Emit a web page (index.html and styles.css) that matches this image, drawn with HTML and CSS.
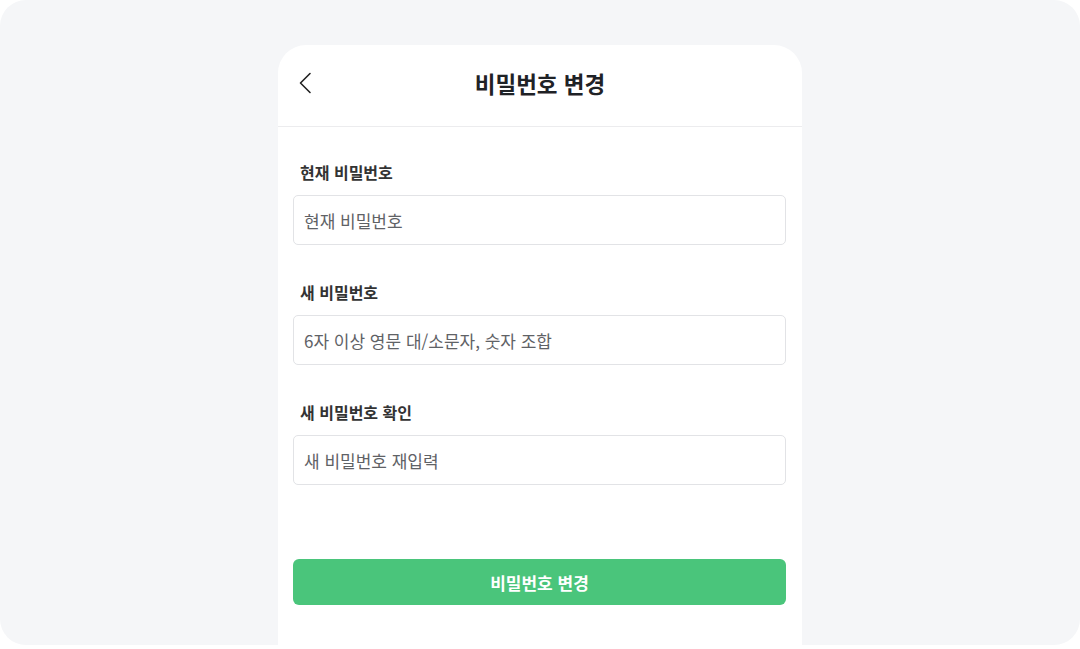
FILE: index.html
```html
<!DOCTYPE html>
<html lang="ko">
<head>
  <meta charset="UTF-8" />
  <meta name="viewport" content="width=device-width, initial-scale=1" />
  <title>비밀번호 변경</title>
  <link rel="stylesheet" href="styles.css">
</head>
<body>
  <div class="frame">
    <div class="card">
      <!-- Шапка с кнопкой назад -->
      <div class="header">
        <button class="back-button" aria-label="뒤로">
          <svg width="14" height="22" viewBox="0 0 14 22" fill="none">
            <path d="M12 1.5 L2.5 11 L12 20.5" stroke="#222" stroke-width="1.6" stroke-linecap="round" stroke-linejoin="round"/>
          </svg>
        </button>
        <div class="header-title">비밀번호 변경</div>
      </div>

      <form class="form">
        <div class="field">
          <label class="field-label" for="current-password">현재 비밀번호</label>
          <input class="field-input" id="current-password" type="password" placeholder="현재 비밀번호">
        </div>
        <div class="field">
          <label class="field-label" for="new-password">새 비밀번호</label>
          <input class="field-input" id="new-password" type="password" placeholder="6자 이상 영문 대/소문자, 숫자 조합">
        </div>
        <div class="field">
          <label class="field-label" for="confirm-password">새 비밀번호 확인</label>
          <input class="field-input" id="confirm-password" type="password" placeholder="새 비밀번호 재입력">
        </div>

        <button class="submit-button" type="button">비밀번호 변경</button>
      </form>
    </div>
  </div>
</body>
</html>
```

FILE: styles.css
```css
/* Reset */
* {
  margin: 0;
  padding: 0;
  box-sizing: border-box;
}
html, body {
  height: 100%;
  background: #fff;
  font-family: 'Noto Sans CJK KR', 'Noto Sans', sans-serif;
  color: #222;
  overflow: hidden;
}
.frame {
  height: 645px;
  background: #f5f6f8;
  border-radius: 26px;
  overflow: hidden;
  display: flex;
  justify-content: center;
  padding-top: 45px;
}
.card {
  width: 524px;
  background: #fff;
  border-radius: 28px 28px 0 0;
  display: flex;
  flex-direction: column;
}
.header {
  height: 82px;
  padding-bottom: 6px;
  border-bottom: 1px solid #ececee;
  display: flex;
  align-items: center;
  justify-content: center;
  position: relative;
}
.back-button {
  position: absolute;
  left: 20px;
  top: 27px;
  background: none;
  border: none;
  cursor: pointer;
  display: flex;
}
.header-title {
  font-size: 22.5px;
  font-weight: 700;
  color: #1f2226;
  line-height: 30px;
}
.form {
  padding: 34px 16px 0 15px;
  display: flex;
  flex-direction: column;
}
.field {
  display: flex;
  flex-direction: column;
  gap: 12px;
  margin-bottom: 36px;
}
.field-label {
  font-size: 16px;
  font-weight: 700;
  line-height: 22px;
  color: #333;
  padding-left: 7px;
}
.field-input {
  height: 50px;
  border: 1px solid #e2e3e6;
  border-radius: 5px;
  padding: 0 10px;
  font-family: inherit;
  font-size: 17px;
  color: #333;
  outline: none;
}
.field-input::placeholder {
  color: #5f6266;
}
.submit-button {
  margin-top: 38px;
  height: 46px;
  border: none;
  border-radius: 6px;
  background: #4ac57b;
  color: #fff;
  font-family: inherit;
  font-size: 17px;
  font-weight: 700;
  cursor: pointer;
}
```
